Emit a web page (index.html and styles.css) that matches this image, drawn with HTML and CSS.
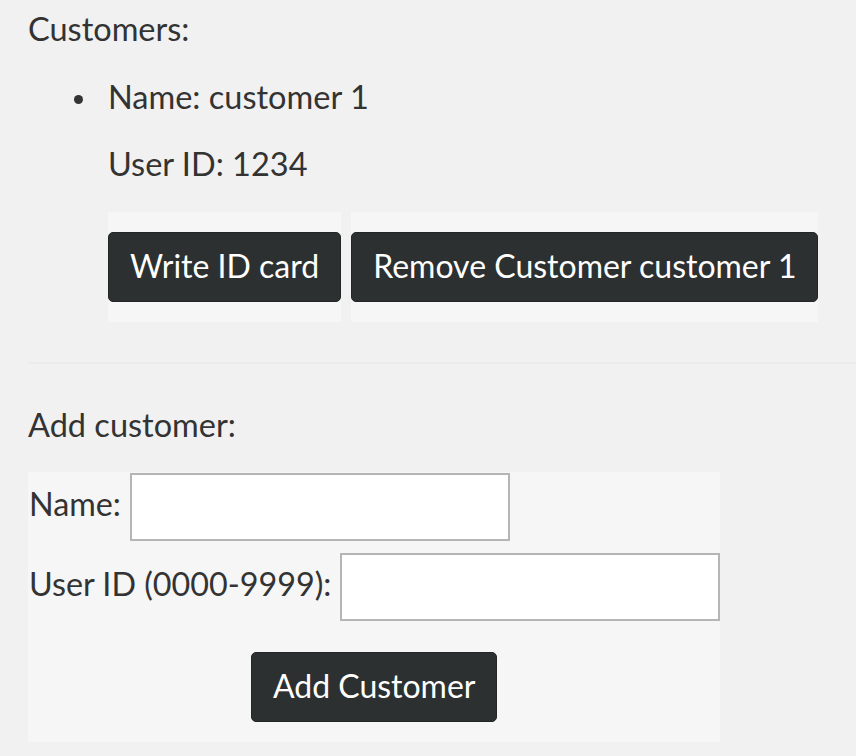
FILE: index.html
```html
<!DOCTYPE html>
<html lang="en">
<head>
<meta charset="utf-8">
<title>Customers</title>
<link rel="stylesheet" href="styles.css">
</head>
<body>
<div class="page">
  <section class="customers">
    <p class="heading">Customers:</p>
    <ul class="list">
      <li class="item">
        <p class="line">Name: customer 1</p>
        <p class="line">User ID: 1234</p>
        <div class="actions">
          <div class="btn-wrap"><button class="btn" type="button">Write ID card</button></div>
          <div class="btn-wrap"><button class="btn" type="button">Remove Customer customer 1</button></div>
        </div>
      </li>
    </ul>
  </section>
  <hr class="sep">
  <section class="add">
    <p class="heading heading-add">Add customer:</p>
    <form class="form">
      <div class="row"><label class="label" for="name">Name:</label><input class="field" id="name" type="text"></div>
      <div class="row"><label class="label" for="uid">User ID (0000-9999):</label><input class="field" id="uid" type="text"></div>
      <div class="submit"><button class="btn" type="button">Add Customer</button></div>
    </form>
  </section>
</div>
</body>
</html>
```

FILE: styles.css
```css
html, body {
  margin: 0;
  background: #f1f1f1;
}
body {
  font-family: Lato, "Open Sans", sans-serif;
  color: #333333;
}
.page {
  padding: 9px 0 0 28px;
}
.heading {
  margin: 0;
  font-size: 32.5px;
  line-height: 40px;
}
.list {
  margin: 28px 0 0;
  padding: 0 0 0 80px;
  list-style: none;
}
.item {
  position: relative;
}
.item::before {
  content: "";
  position: absolute;
  left: -34px;
  top: 18px;
  width: 9px;
  height: 9px;
  border-radius: 50%;
  background: #333333;
}
.line {
  margin: 0;
  font-size: 32.5px;
  line-height: 40px;
}
.line + .line {
  margin-top: 27px;
}
.actions {
  display: flex;
  gap: 10px;
  margin-top: 28px;
}
.btn-wrap {
  background: #f6f6f6;
  padding: 20px 0;
}
.btn {
  display: block;
  box-sizing: border-box;
  height: 70px;
  margin: 0;
  padding: 0 21px 2px;
  background: #2c3031;
  color: #ffffff;
  border: 1px solid #232627;
  border-radius: 5px;
  font-family: Lato, "Open Sans", sans-serif;
  font-size: 32px;
  line-height: 40px;
  white-space: nowrap;
}
.sep {
  margin: 40px 0 0;
  border: 0;
  height: 2px;
  background: #ebebeb;
}
.heading-add {
  margin-top: 41px;
}
.form {
  display: inline-block;
  margin-top: 27px;
  background: #f6f6f6;
  padding: 1px 0 20px;
}
.row {
  display: flex;
  align-items: center;
  gap: 9px;
}
.row + .row {
  margin-top: 12px;
}
.label {
  font-size: 32.3px;
  line-height: 40px;
  margin-bottom: 6px;
  padding-left: 1px;
}
.field {
  box-sizing: border-box;
  width: 380px;
  height: 68px;
  margin: 0;
  padding: 0 10px;
  border: 2px solid #b5b5b5;
  border-radius: 0;
  background: #ffffff;
  font: inherit;
  font-size: 32px;
  outline: none;
}
.submit {
  display: flex;
  justify-content: center;
  margin-top: 31px;
}
```
